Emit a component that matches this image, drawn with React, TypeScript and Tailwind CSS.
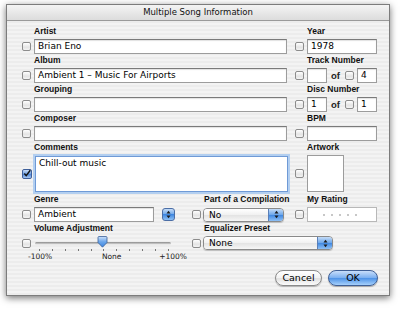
import React from "react";

const font = { fontFamily: '"Lucida Grande", "DejaVu Sans", Verdana, sans-serif' };
const labelFont = { fontFamily: '"Liberation Sans", Arial, sans-serif' };

function Check({ checked = false }: { checked?: boolean }) {
  if (checked) {
    return (
      <div className="w-[10px] h-[10px] shrink-0 rounded-[2px] border border-[#3e5f9a] bg-[linear-gradient(#c9dcf6,#6e9fe0_50%,#4a82d4_50%,#a8c8f2)] flex items-center justify-center">
        <svg width="9" height="9" viewBox="0 0 9 9">
          <path d="M1.5 4.5 L3.6 7 L8.2 0.8" fill="none" stroke="#111" strokeWidth="1.6" />
        </svg>
      </div>
    );
  }
  return (
    <div className="w-[9px] h-[9px] shrink-0 rounded-[2px] border border-[#8c8c8c] bg-[linear-gradient(#ffffff,#e4e4e4_60%,#f4f4f4)]" />
  );
}

function Label({ children, pad = true }: { children: React.ReactNode; pad?: boolean }) {
  return (
    <div
      className={`h-[12px] leading-[12px] text-[8.5px] font-bold text-[#111] whitespace-nowrap ${pad ? "pl-[12px]" : ""}`}
      style={labelFont}
    >
      {children}
    </div>
  );
}

function Field({ w, value, h = 15 }: { w: string; value?: string; h?: number }) {
  return (
    <div
      className={`${w} shrink-0 bg-white border border-[#9c9c9c] border-t-[#7a7a7a] shadow-[inset_0_1px_1px_rgba(0,0,0,0.12)] px-[3px] text-[9px] leading-[13px] text-black whitespace-nowrap overflow-hidden`}
      style={{ height: h }}
    >
      {value}
    </div>
  );
}

function Arrows() {
  return (
    <svg width="5" height="9" viewBox="0 0 5 9">
      <path d="M0.5 3.5 L2.5 0.8 L4.5 3.5 Z" fill="#1a1a1a" />
      <path d="M0.5 5.5 L2.5 8.2 L4.5 5.5 Z" fill="#1a1a1a" />
    </svg>
  );
}

function Popup({ w, value }: { w: string; value: string }) {
  return (
    <div className={`${w} h-[14px] shrink-0 flex rounded-[4px] border border-[#8a8a8a] overflow-hidden shadow-[0_1px_1px_rgba(0,0,0,0.2)]`}>
      <div className="flex-1 bg-[linear-gradient(#ffffff,#f0f0f0_50%,#e2e2e2_50%,#f6f6f6)] pl-[5px] text-[9px] leading-[12px] text-black">
        {value}
      </div>
      <div className="w-[15px] border-l border-[#5a7fb8] bg-[linear-gradient(#c5dcf7,#6aa5ea_50%,#3d86e0_50%,#8ec0f5)] flex items-center justify-center">
        <Arrows />
      </div>
    </div>
  );
}

export default function App() {
  const ticks = Array.from({ length: 11 });
  return (
    <div className="w-[400px] h-[309px] bg-white pt-[4px] pl-[6px]" style={font}>
      <div className="w-[384px] h-[292px] flex flex-col border border-[#7c7c7c] shadow-[0_2px_7px_rgba(0,0,0,0.55)] bg-[repeating-linear-gradient(0deg,#ececec_0px,#ececec_2px,#f3f3f3_2px,#f3f3f3_4px)]">
        {/* Title bar */}
        <div className="h-[16px] shrink-0 border-b border-[#9a9a9a] bg-[linear-gradient(#f4f4f4,#dcdcdc)] text-center text-[8.5px] leading-[15px] text-[#111]">
          Multiple Song Information
        </div>

        <div className="flex flex-col pl-[15px] pt-[4px]">
          {[
            { l: "Artist", v: "Brian Eno", r: "Year" },
            { l: "Album", v: "Ambient 1 – Music For Airports", r: "Track Number" },
            { l: "Grouping", v: "", r: "Disc Number" },
            { l: "Composer", v: "", r: "BPM" },
          ].map((row, i) => (
            <div key={row.l} className="flex">
              <div className="w-[273px] flex flex-col">
                <Label>{row.l}</Label>
                <div className="mt-[2px] flex items-center gap-[3px]">
                  <Check />
                  <Field w="w-[253px]" value={row.v} />
                </div>
              </div>
              <div className="flex flex-col">
                <Label>{row.r}</Label>
                <div className="mt-[2px] flex items-center gap-[3px]">
                  <Check />
                  {i === 0 && <Field w="w-[70px]" value="1978" />}
                  {i === 3 && <Field w="w-[70px]" />}
                  {(i === 1 || i === 2) && (
                    <div className="flex items-center">
                      <Field w="w-[20px]" value={i === 2 ? "1" : ""} />
                      <span className="ml-[4px] mr-[5px] text-[9.5px] leading-[13px] font-bold text-[#222]" style={labelFont}>of</span>
                      <Check />
                      <div className="ml-[3px]">
                        <Field w="w-[20px]" value={i === 1 ? "4" : "1"} />
                      </div>
                    </div>
                  )}
                </div>
              </div>
            </div>
          ))}

          {/* Comments / Artwork */}
          <div className="flex">
            <div className="w-[273px] flex flex-col">
              <Label>Comments</Label>
              <div className="mt-[2px] h-[37px] flex items-center gap-[3px]">
                <Check checked />
                <div className="w-[253px] h-[36px] bg-white border border-[#6f9ad6] shadow-[0_0_0_2px_#b3cff0] px-[3px] text-[9px] leading-[13px] text-black">
                  Chill-out music
                </div>
              </div>
            </div>
            <div className="flex flex-col">
              <Label>Artwork</Label>
              <div className="mt-[2px] h-[37px] flex items-center gap-[3px]">
                <Check />
                <div className="w-[37px] h-[37px] bg-white border border-[#9c9c9c]" />
              </div>
            </div>
          </div>

          {/* Genre / Compilation / Rating */}
          <div className="flex mt-[1px]">
            <div className="w-[170px] flex flex-col">
              <Label>Genre</Label>
              <div className="mt-[2px] flex items-center gap-[3px]">
                <Check />
                <Field w="w-[120px]" value="Ambient" />
                <div className="ml-[5px] w-[13px] h-[13px] rounded-[3px] border border-[#4b6ea6] bg-[linear-gradient(#c5dcf7,#6aa5ea_50%,#3d86e0_50%,#8ec0f5)] flex items-center justify-center">
                  <Arrows />
                </div>
              </div>
            </div>
            <div className="w-[103px] flex flex-col">
              <Label>Part of a Compilation</Label>
              <div className="mt-[2px] h-[15px] flex items-center gap-[2px]">
                <Check />
                <Popup w="w-[81px]" value="No" />
              </div>
            </div>
            <div className="flex flex-col">
              <Label>My Rating</Label>
              <div className="mt-[2px] flex items-center gap-[3px]">
                <Check />
                <div className="w-[70px] h-[15px] bg-white border border-[#b8b8b8] flex items-center gap-[6px] pl-[15px]">
                  {[0, 1, 2, 3, 4].map((d) => (
                    <div key={d} className="w-[2px] h-[2px] rounded-full bg-[#b4b4b4]" />
                  ))}
                </div>
              </div>
            </div>
          </div>

          {/* Volume / Equalizer */}
          <div className="flex">
            <div className="w-[170px] flex flex-col">
              <Label>Volume Adjustment</Label>
              <div className="mt-[2px] h-[14px] flex items-center gap-[3px]">
                <Check />
                <div className="relative w-[138px] h-[14px] flex items-center">
                  <div className="ml-[1px] w-[136px] h-[3px] rounded-full bg-[linear-gradient(#8a8a8a,#cfcfcf)] border-b border-[#e8e8e8]" />
                  <svg className="absolute left-[63px] top-0" width="11" height="12" viewBox="0 0 11 12">
                    <defs>
                      <linearGradient id="th" x1="0" y1="0" x2="0" y2="1">
                        <stop offset="0" stopColor="#cfe2fa" />
                        <stop offset="0.5" stopColor="#6aa5ea" />
                        <stop offset="1" stopColor="#3d86e0" />
                      </linearGradient>
                    </defs>
                    <path d="M1 1.5 Q1 0.5 2 0.5 L9 0.5 Q10 0.5 10 1.5 L10 6.5 L5.5 11.2 L1 6.5 Z" fill="url(#th)" stroke="#3b5f98" strokeWidth="0.8" />
                  </svg>
                </div>
              </div>
              <div className="pl-[17px] w-[147px] mt-[-1px] flex justify-between">
                {ticks.map((_, t) => (
                  <div key={t} className="w-[1px] h-[2px] bg-[#777]" />
                ))}
              </div>
              <div className="pl-[6px] w-[165px] mt-[1px] flex justify-between text-[7.5px] leading-[9px] text-[#222]">
                <span>-100%</span>
                <span className="ml-[12px]">None</span>
                <span>+100%</span>
              </div>
            </div>
            <div className="flex flex-col">
              <Label>Equalizer Preset</Label>
              <div className="mt-[2px] flex items-center gap-[2px]">
                <Check />
                <Popup w="w-[130px]" value="None" />
              </div>
            </div>
          </div>

          {/* Buttons */}
          <div className="flex justify-end gap-[6px] pr-[11px] mt-[9px]">
            <button className="w-[47px] h-[16px] rounded-full border border-[#8a8a8a] bg-[linear-gradient(#ffffff,#f2f2f2_50%,#e0e0e0_50%,#fbfbfb)] shadow-[0_1px_1px_rgba(0,0,0,0.25)] text-[9.5px] leading-[14px] text-black">
              Cancel
            </button>
            <button className="w-[50px] h-[16px] rounded-full border border-[#3f5f95] bg-[linear-gradient(#c9defa,#78aef0_50%,#4a90e6_50%,#a6d0fb)] shadow-[0_1px_1px_rgba(0,0,0,0.3)] text-[9.5px] leading-[14px] text-black">
              OK
            </button>
          </div>
        </div>
      </div>
    </div>
  );
}
